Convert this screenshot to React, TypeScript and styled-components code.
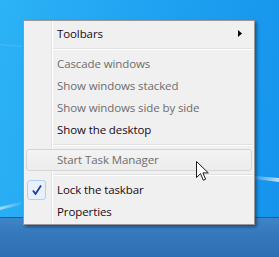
import { createGlobalStyle, styled } from "styled-components";

const GlobalStyle = createGlobalStyle`
  html, body {
    margin: 0;
    padding: 0;
    width: 279px;
    height: 257px;
    overflow: hidden;
  }
  body {
    font-family: "Open Sans", "Noto Sans", sans-serif;
  }
`;

interface MenuEntry {
  label: string;
  disabled?: boolean;
  checked?: boolean;
  submenu?: boolean;
  hover?: boolean;
}

const groups: MenuEntry[][] = [
  [{ label: "Toolbars", submenu: true }],
  [
    { label: "Cascade windows", disabled: true },
    { label: "Show windows stacked", disabled: true },
    { label: "Show windows side by side", disabled: true },
    { label: "Show the desktop" },
  ],
  [{ label: "Start Task Manager", disabled: true, hover: true }],
  [{ label: "Lock the taskbar", checked: true }, { label: "Properties" }],
];

const App = () => {
  return (
    <Desktop>
      <GlobalStyle />
      <Wallpaper viewBox="0 0 279 257" preserveAspectRatio="none">
        <defs>
          <linearGradient id="streak" x1="0" y1="0" x2="1" y2="0">
            <stop offset="0" stopColor="#ffffff" stopOpacity="0.55" />
            <stop offset="1" stopColor="#ffffff" stopOpacity="0" />
          </linearGradient>
          <linearGradient id="streak2" x1="1" y1="0" x2="0" y2="0">
            <stop offset="0" stopColor="#ffffff" stopOpacity="0.7" />
            <stop offset="1" stopColor="#ffffff" stopOpacity="0.1" />
          </linearGradient>
        </defs>
        <path d="M0 207 L24 201 L24 204 L0 210 Z" fill="url(#streak)" />
        <path d="M0 44 L22 46 L22 47 L0 45 Z" fill="#ffffff" opacity="0.12" />
        <path d="M254 176 L279 178 L279 182 L254 179 Z" fill="url(#streak2)" />
      </Wallpaper>
      <Taskbar />

      <Menu>
        <Gutter />
        {groups.map((group, gi) => (
          <Group key={gi}>
            {gi > 0 && <Separator />}
            {group.map((item) => (
              <Item key={item.label} $hover={item.hover}>
                <CheckCell>
                  {item.checked && (
                    <CheckBox>
                      <svg width="12" height="12" viewBox="0 0 12 12">
                        <path
                          d="M2 6.5 L4.5 10 L10 1.5"
                          fill="none"
                          stroke="#1a3ca8"
                          strokeWidth="1.8"
                          strokeLinejoin="round"
                        />
                      </svg>
                    </CheckBox>
                  )}
                </CheckCell>
                <Label $disabled={item.disabled}>{item.label}</Label>
                {item.submenu && (
                  <SubArrow width="4" height="7" viewBox="0 0 4 7">
                    <path d="M0 0 L4 3.5 L0 7 Z" fill="#000" />
                  </SubArrow>
                )}
              </Item>
            ))}
          </Group>
        ))}
      </Menu>

      <Cursor width="14" height="22" viewBox="0 0 14 22">
        <path
          d="M0.5 0.5 L0.5 16.5 L4.5 12.7 L7.3 19.2 L9.6 18.2 L6.9 11.9 L12.3 11.9 Z"
          fill="#ffffff"
          stroke="#1a1a1a"
          strokeWidth="1"
          strokeLinejoin="round"
        />
      </Cursor>
    </Desktop>
  );
};

export default App;

const Desktop = styled.div`
  position: relative;
  width: 279px;
  height: 257px;
  overflow: hidden;
  background: linear-gradient(100deg, #2cb2f6 0%, #1fa2f1 50%, #1593ec 100%);
`;

const Wallpaper = styled.svg`
  position: absolute;
  inset: 0;
  width: 279px;
  height: 257px;
`;

const Taskbar = styled.div`
  position: absolute;
  left: 0;
  right: 0;
  bottom: 0;
  height: 39px;
  border-top: 1px solid #1f5e98;
  background: linear-gradient(180deg, #3f85c8 0%, #3579bd 40%, #2e6eb2 100%);
`;

const Menu = styled.div`
  position: absolute;
  left: 23px;
  top: 20px;
  width: 230px;
  padding: 2px 0 1px;
  display: flex;
  flex-direction: column;
  background: #f0f0f0;
  border: 1px solid #979797;
  box-shadow: 2px 2px 3px rgba(0, 0, 0, 0.4);
`;

const Gutter = styled.div`
  position: absolute;
  left: 27px;
  top: 0;
  bottom: 0;
  width: 1px;
  background: #e2e3e3;
  border-right: 1px solid #ffffff;
`;

const Group = styled.div`
  display: flex;
  flex-direction: column;
`;

const Separator = styled.div`
  height: 8px;
  margin-left: 30px;
  margin-right: 1px;
  display: flex;
  align-items: center;

  &::before {
    content: "";
    flex: 1;
    height: 1px;
    background: #e0e0e0;
    border-bottom: 1px solid #ffffff;
  }
`;

const Item = styled.div<{ $hover?: boolean }>`
  position: relative;
  height: 22px;
  margin: 0 2px;
  display: flex;
  align-items: center;
  box-sizing: border-box;
  border-radius: 3px;
  border: 1px solid ${({ $hover }) => ($hover ? "#d5d5d5" : "transparent")};
  background: ${({ $hover }) =>
    $hover
      ? "linear-gradient(180deg, #f3f3f3 0%, #ececec 100%)"
      : "transparent"};
`;

const CheckCell = styled.div`
  width: 21px;
  height: 20px;
  margin-left: -1px;
  display: flex;
  align-items: center;
  justify-content: center;
`;

const CheckBox = styled.div`
  width: 19px;
  height: 20px;
  box-sizing: border-box;
  display: flex;
  align-items: center;
  justify-content: center;
  border: 1px solid #aecff7;
  border-radius: 3px;
  background: #e8f0fb;
`;

const Label = styled.span<{ $disabled?: boolean }>`
  margin-left: 10px;
  font-size: 11.5px;
  letter-spacing: -0.1px;
  line-height: 20px;
  color: ${({ $disabled }) => ($disabled ? "#6d6d6d" : "#1a0a14")};
  white-space: nowrap;
`;

const SubArrow = styled.svg`
  position: absolute;
  right: 9px;
  top: 6px;
`;

const Cursor = styled.svg`
  position: absolute;
  left: 196px;
  top: 161px;
`;
